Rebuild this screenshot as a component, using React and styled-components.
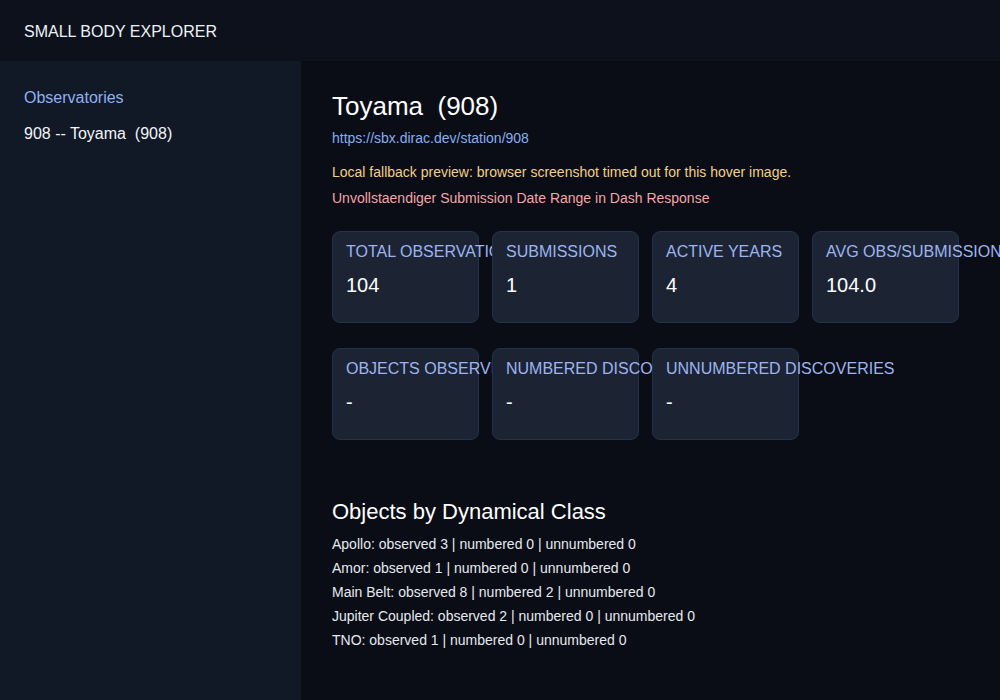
import React from "react";
import styled, { createGlobalStyle } from "styled-components";

const Global = createGlobalStyle`
  html, body { margin: 0; padding: 0; background: #0a0d15; }
  body { font-family: "Liberation Sans", Arial, sans-serif; }
  * { box-sizing: border-box; }
`;

const Page = styled.div`
  width: 1000px;
  height: 700px;
  display: flex;
  flex-direction: column;
  background: #0a0d15;
  color: #f1f5f9;
  overflow: hidden;
`;

const Header = styled.header`
  height: 61px;
  flex: none;
  display: flex;
  align-items: center;
  padding: 2px 24px 0;
  background: #0c111b;
  font-size: 16px;
  color: #eef2f7;
`;

const Body = styled.div`
  flex: 1;
  display: flex;
  min-height: 0;
`;

const Sidebar = styled.aside`
  width: 301px;
  flex: none;
  background: #111826;
  padding: 27px 24px;
  display: flex;
  flex-direction: column;
  gap: 16px;
`;

const SideTitle = styled.div`
  font-size: 16px;
  line-height: 20px;
  color: #8fb0f3;
`;

const SideItem = styled.div`
  font-size: 16px;
  line-height: 20px;
  color: #f1f5f9;
  white-space: pre;
`;

const Main = styled.main`
  flex: 1;
  padding: 29px 31px;
  display: flex;
  flex-direction: column;
`;

const Title = styled.h1`
  margin: 0;
  font-size: 26px;
  font-weight: normal;
  line-height: 32px;
  white-space: pre;
  color: #ffffff;
`;

const Link = styled.a`
  margin-top: 7px;
  font-size: 14px;
  line-height: 18px;
  color: #86aef2;
  text-decoration: none;
`;

const Note = styled.div`
  font-size: 14px;
  line-height: 18px;
  margin-top: ${(p) => p.$mt}px;
  color: ${(p) => p.$color};
`;

const CardRow = styled.div`
  display: flex;
  gap: 13px;
  margin-top: ${(p) => p.$mt}px;
`;

const Card = styled.div`
  width: 147px;
  height: 92px;
  flex: none;
  background: #1c2434;
  border: 1px solid #22314c;
  border-radius: 8px;
  padding: 10px 13px;
  display: flex;
  flex-direction: column;
`;

const CardLabel = styled.div`
  font-size: 16px;
  line-height: 20px;
  color: #9db4f0;
  white-space: nowrap;
  text-transform: uppercase;
`;

const CardValue = styled.div`
  margin-top: 11px;
  font-size: 20px;
  line-height: 24px;
  color: #ffffff;
`;

const SectionTitle = styled.h2`
  margin: 58px 0 0;
  font-size: 22px;
  font-weight: normal;
  line-height: 28px;
  color: #ffffff;
`;

const ClassList = styled.div`
  margin-top: 6px;
  display: flex;
  flex-direction: column;
`;

const ClassLine = styled.div`
  font-size: 14px;
  line-height: 24px;
  color: #e5e9f0;
`;

const row1 = [
  ["Total Observations", "104"],
  ["Submissions", "1"],
  ["Active Years", "4"],
  ["Avg Obs/Submission", "104.0"],
];
const row2 = [
  ["Objects Observed", "-"],
  ["Numbered Discoveries", "-"],
  ["Unnumbered Discoveries", "-"],
];

const classes = [
  "Apollo: observed 3 | numbered 0 | unnumbered 0",
  "Amor: observed 1 | numbered 0 | unnumbered 0",
  "Main Belt: observed 8 | numbered 2 | unnumbered 0",
  "Jupiter Coupled: observed 2 | numbered 0 | unnumbered 0",
  "TNO: observed 1 | numbered 0 | unnumbered 0",
];

function StatCard({ label, value }) {
  return (
    <Card>
      <CardLabel>{label}</CardLabel>
      <CardValue>{value}</CardValue>
    </Card>
  );
}

export default function App() {
  return (
    <Page>
      <Global />
      <Header>SMALL BODY EXPLORER</Header>
      <Body>
        <Sidebar>
          <SideTitle>Observatories</SideTitle>
          <SideItem>{"908 -- Toyama  (908)"}</SideItem>
        </Sidebar>
        <Main>
          <Title>{"Toyama  (908)"}</Title>
          <Link href="#">https://sbx.dirac.dev/station/908</Link>
          <Note $mt={16} $color="#f4cf87">
            Local fallback preview: browser screenshot timed out for this hover image.
          </Note>
          <Note $mt={8} $color="#f4a5a8">
            Unvollstaendiger Submission Date Range in Dash Response
          </Note>
          <CardRow $mt={24}>
            {row1.map(([l, v]) => (
              <StatCard key={l} label={l} value={v} />
            ))}
          </CardRow>
          <CardRow $mt={25}>
            {row2.map(([l, v]) => (
              <StatCard key={l} label={l} value={v} />
            ))}
          </CardRow>
          <SectionTitle>Objects by Dynamical Class</SectionTitle>
          <ClassList>
            {classes.map((c) => (
              <ClassLine key={c}>{c}</ClassLine>
            ))}
          </ClassList>
        </Main>
      </Body>
    </Page>
  );
}
